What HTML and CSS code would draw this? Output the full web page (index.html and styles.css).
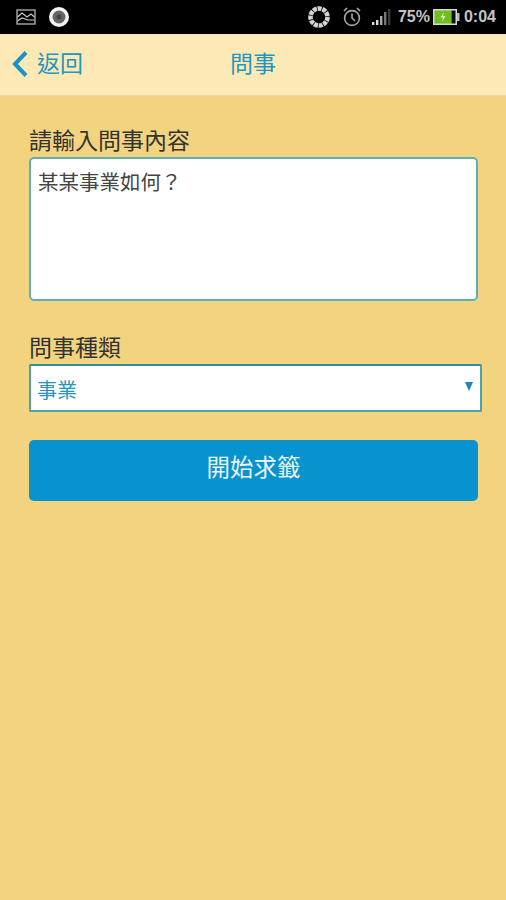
FILE: index.html
```html
<!DOCTYPE html>
<html lang="zh-Hant">
<head>
<meta charset="utf-8">
<title>問事</title>
<link rel="stylesheet" href="styles.css">
</head>
<body>
<div class="statusbar">
	<div class="status-left">
		<svg class="ic-photo" width="20" height="16" viewBox="0 0 20 16">
			<rect x="1" y="1" width="18" height="14" fill="none" stroke="#a8a8a8" stroke-width="1.4"/>
			<path d="M1.5 8 L6 4 L11 8 L15 5 L18.5 8 M1.5 12 L6 9 L12 11 L18.5 11" fill="none" stroke="#c8c8c8" stroke-width="1.2"/>
		</svg>
		<svg class="ic-record" width="22" height="22" viewBox="0 0 22 22">
			<circle cx="11" cy="11" r="10" fill="#f4f4f4"/>
			<circle cx="11" cy="11" r="6.5" fill="#666"/>
			<circle cx="11" cy="11" r="2.5" fill="#444"/>
		</svg>
	</div>
	<div class="status-right">
		<svg class="ic-ring" width="24" height="24" viewBox="0 0 24 24">
			<circle cx="12" cy="12" r="8.5" fill="none" stroke="#d4d4d4" stroke-width="4.6" stroke-dasharray="4 0.8"/>
		</svg>
		<svg class="ic-alarm" width="20" height="22" viewBox="0 0 20 22">
			<circle cx="10" cy="12" r="7.4" fill="none" stroke="#a8a8a8" stroke-width="1.6"/>
			<path d="M10 7.5 V12 L13 15 M2 5 L5 2 M18 5 L15 2" fill="none" stroke="#a8a8a8" stroke-width="1.6"/>
		</svg>
		<svg class="ic-signal" width="22" height="18" viewBox="0 0 22 18">
			<rect x="1" y="14" width="2.4" height="3" fill="#ddd"/>
			<rect x="5" y="12" width="2.4" height="5" fill="#ddd"/>
			<rect x="9" y="8" width="2.4" height="9" fill="#aaa"/>
			<rect x="13" y="4" width="2.4" height="13" fill="#777"/>
			<rect x="17" y="1" width="2.4" height="16" fill="#3a3a3a"/>
		</svg>
		<span class="status-text pct">75%</span>
		<svg class="ic-batt" width="27" height="16" viewBox="0 0 27 16">
			<rect x="0" y="0" width="24" height="16" fill="#d8d8d8"/>
			<rect x="1.5" y="1.5" width="17" height="13" fill="#6cbf1e"/>
			<rect x="18.5" y="1.5" width="4" height="13" fill="#111"/>
			<rect x="24" y="4" width="2.5" height="8" fill="#bbb"/>
			<path d="M11 3 L7.5 8.5 H10 L9 13 L12.5 7 H10 Z" fill="#e8f5d0"/>
		</svg>
		<span class="status-text">0:04</span>
	</div>
</div>

<div class="navbar">
	<a class="back">
		<svg class="ic-back" width="18" height="28" viewBox="0 0 18 28">
			<path d="M15 2.5 L4 14 L15 25.5" fill="none" stroke="#1a93c4" stroke-width="4"/>
		</svg>
		<span>返回</span>
	</a>
	<div class="nav-title">問事</div>
</div>

<div class="content">
	<div class="field-label first">請輸入問事內容</div>
	<div class="textbox">某某事業如何？</div>
	<div class="field-label second">問事種類</div>
	<div class="selectbox">
		<span>事業</span>
		<i class="caret"></i>
	</div>
	<div class="btn-start">開始求籤</div>
</div>
</body>
</html>
```

FILE: styles.css
```css
html, body
{
	margin: 0;
	padding: 0;
}
body
{
	width: 506px;
	height: 900px;
	overflow: hidden;
	background-color: #F2D37F;
	font-family: "Liberation Sans", "Noto Sans CJK TC", sans-serif;
}
.statusbar
{
	height: 34px;
	background-color: #000;
	display: flex;
	justify-content: space-between;
	align-items: center;
	padding: 0 10px 0 16px;
}
.status-left, .status-right
{
	display: flex;
	align-items: center;
}
.status-left
{
	gap: 12px;
}
.ic-ring
{
	margin-right: 11px;
}
.ic-alarm
{
	margin-right: 9px;
}
.ic-signal
{
	margin-right: 5px;
}
.ic-batt
{
	margin: 0 4px 0 3px;
}
.status-text
{
	color: #c4c4c4;
	font-size: 16px;
	font-weight: bold;
}
.navbar
{
	box-sizing: border-box;
	height: 62px;
	padding: 0 11px 6px 11px;
	background-color: #FDE9B6;
	border-bottom: 1px solid #EBD9A6;
	display: grid;
	grid-template-columns: 1fr auto 1fr;
	align-items: center;
}
.back
{
	display: flex;
	align-items: center;
	gap: 8px;
	color: #2296BE;
	font-size: 23px;
}
.ic-back
{
	margin-top: 5px;
}
.nav-title
{
	color: #2296BE;
	font-size: 23px;
}
.content
{
	padding: 0 28px 0 29px;
}
.field-label
{
	color: #333;
	font-size: 23px;
	line-height: 30px;
}
.first
{
	margin-top: 30px;
}
.second
{
	margin-top: 32px;
}
.textbox
{
	box-sizing: border-box;
	height: 144px;
	margin-top: 1px;
	padding: 10px 7px;
	background-color: #fff;
	border: 2px solid #5FAFB4;
	border-radius: 5px;
	color: #444;
	font-size: 20.5px;
	line-height: 28px;
}
.selectbox
{
	box-sizing: border-box;
	height: 48px;
	width: 453px;
	margin-top: 1px;
	padding: 2px 7px 0 6px;
	background-color: #fff;
	border: 2px solid #4FA3A8;
	border-top-color: #2F8F90;
	border-radius: 2px;
	display: flex;
	align-items: center;
	justify-content: space-between;
	color: #2296BE;
	font-size: 20px;
}
.caret
{
	width: 0;
	height: 0;
	margin-bottom: 5px;
	border-left: 4px solid transparent;
	border-right: 4px solid transparent;
	border-top: 9px solid #1F87B5;
}
.btn-start
{
	height: 61px;
	margin-top: 28px;
	background-color: #0892CE;
	border-radius: 5px;
	color: #EAF6FB;
	font-size: 23.5px;
	line-height: 57px;
	text-align: center;
}
```
